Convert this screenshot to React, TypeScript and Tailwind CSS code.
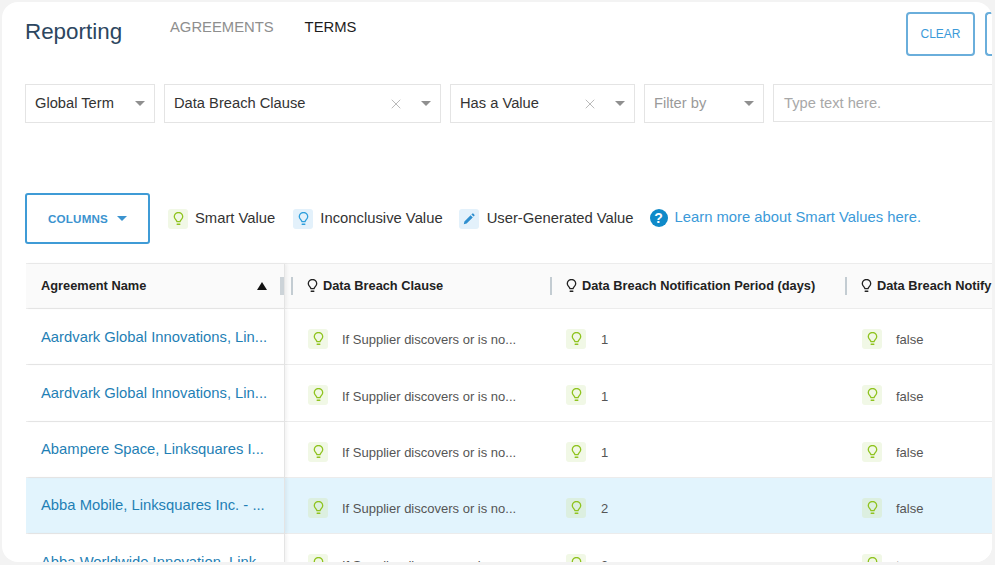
import { X } from "lucide-react";

const rows = [
  { name: "Aardvark Global Innovations, Lin...", period: "1", notify: "false" },
  { name: "Aardvark Global Innovations, Lin...", period: "1", notify: "false" },
  { name: "Abampere Space, Linksquares I...", period: "1", notify: "false" },
  { name: "Abba Mobile, Linksquares Inc. - ...", period: "2", notify: "false", active: true },
  { name: "Abba Worldwide Innovation, Link...", period: "3", notify: "true" },
];

function Bulb({ className }: { className?: string }) {
  return (
    <svg viewBox="0 0 14 18" fill="none" stroke="currentColor" strokeWidth="1.7" strokeLinecap="round" strokeLinejoin="round" className={className}>
      <path d="M5 12.4C4.6 10.2 1.6 8.9 1.6 6A5.4 5.4 0 0 1 12.4 6C12.4 8.9 9.4 10.2 9 12.4Z" />
      <path d="M5.4 15.8H8.6" strokeWidth="2" />
    </svg>
  );
}

function Caret({ className }: { className?: string }) {
  return <span className={`h-0 w-0 border-x-[5px] border-t-[5px] border-x-transparent ${className ?? "border-t-[#8f8f8f]"}`} />;
}

function Select({ label, width, clear, muted }: { label: string; width: string; clear?: boolean; muted?: boolean }) {
  return (
    <div className={`flex h-[39px] shrink-0 items-center border-[1.5px] border-[#e4e4e4] pl-[9px] pr-[9px] text-[14.7px] ${width} ${muted ? "text-[#9a9a9a]" : "text-[#333]"}`}>
      <span className="grow">{label}</span>
      {clear && <X size={16} strokeWidth={1.4} className="mr-[17px] text-[#b5b5b5]" />}
      <Caret />
    </div>
  );
}

function Tag({ tone, children }: { tone: string; children: React.ReactNode }) {
  return <span className={`grid size-5 shrink-0 place-items-center rounded-[3px] ${tone}`}>{children}</span>;
}

function HeadCell({ label, width }: { label: string; width: string }) {
  return (
    <div className={`flex shrink-0 items-center ${width}`}>
      <span className="h-[18px] w-0.5 shrink-0 bg-[#c3ccd2]" />
      <Bulb className="ml-3.5 mr-[5px] h-[14px] w-[11px] shrink-0 text-[#222]" />
      <span className="whitespace-nowrap text-[12.8px] font-bold text-[#222]">{label}</span>
    </div>
  );
}

function ValueCell({ text, width, gap, active }: { text: string; width: string; gap: string; active?: boolean }) {
  return (
    <div className={`flex shrink-0 items-center pt-[5px] ${width}`}>
      <Tag tone={active ? "bg-[#dcefe0]" : "bg-[#f1f8e6]"}>
        <Bulb className="h-[14px] w-[11px] text-[#8fc31f]" />
      </Tag>
      <span className={`whitespace-nowrap pt-0.5 text-[13px] text-[#555] ${gap}`}>{text}</span>
    </div>
  );
}

export default function App() {
  return (
    <div className="h-[565px] w-[995px] overflow-hidden bg-[#f3f3f3] p-0.5 font-['Liberation_Sans',Arial,sans-serif]">
      <div className="h-[560px] w-[990px] overflow-hidden rounded-2xl bg-white">
        <header className="flex h-[82px] pl-[23px]">
          <h1 className="w-[145px] pt-4 text-[22.4px] leading-7 text-[#2c4660]">Reporting</h1>
          <nav className="flex gap-[31px] pt-4 text-[14.8px] leading-[18px]">
            <span className="text-[#8e8e8e]">AGREEMENTS</span>
            <span className="text-[#1c1c1c]">TERMS</span>
          </nav>
          <div className="ml-auto flex gap-2.5 pt-2.5">
            <button type="button" className="h-11 w-[69px] rounded border-2 border-[#6aaedb] text-xs text-[#3b9ad9]">CLEAR</button>
            <span className="h-11 w-[7px] rounded-l border-y-2 border-l-2 border-[#6aaedb]" />
          </div>
        </header>

        <div className="flex gap-[9px] pl-[23px]">
          <Select label="Global Term" width="w-[130px]" />
          <Select label="Data Breach Clause" width="w-[277px]" clear />
          <Select label="Has a Value" width="w-[185px]" clear />
          <Select label="Filter by" width="w-[120px]" muted />
          <div className="flex h-[38px] grow items-center border-[1.5px] border-r-0 border-[#e4e4e4] pl-[10px] text-[14.7px] text-[#a8a8a8]">Type text here.</div>
        </div>

        <div className="mt-[70px] flex items-center pl-[23px]">
          <button type="button" className="flex h-[51px] w-[125px] items-center justify-center gap-[9px] rounded-[3px] border-2 border-[#3f9bd6] text-[11.6px] font-bold tracking-[0.2px] text-[#3b93cf]">
            COLUMNS
            <Caret className="border-t-[#3b93cf]" />
          </button>
          <div className="ml-[18px] flex items-center gap-[7px] text-[14.8px] text-[#333]">
            <Tag tone="bg-[#f1f8e6]"><Bulb className="h-[14px] w-[11px] text-[#8fc31f]" /></Tag>
            <span>Smart Value</span>
          </div>
          <div className="ml-[18px] flex items-center gap-[7px] text-[14.8px] text-[#333]">
            <Tag tone="bg-[#e3f1fb]"><Bulb className="h-[14px] w-[11px] text-[#2f9fdc]" /></Tag>
            <span>Inconclusive Value</span>
          </div>
          <div className="ml-4 flex items-center gap-2 text-[14.8px] text-[#333]">
            <Tag tone="bg-[#e3f1fb]">
              <svg viewBox="0 0 12 12" className="size-3 fill-[#2f8fcf]">
                <path d="M0.8 11.2 1.4 8.4 7.6 2.2 9.8 4.4 3.6 10.6ZM8.4 1.4 9.3 0.6C9.6 0.3 10 0.3 10.3 0.6L11.4 1.7C11.7 2 11.7 2.4 11.4 2.7L10.6 3.6Z" />
              </svg>
            </Tag>
            <span>User-Generated Value</span>
          </div>
          <div className="ml-[16px] flex items-center gap-[7px] pb-0.5 text-[14.8px] text-[#3b9ad9]">
            <span className="grid size-[18px] place-items-center rounded-full bg-[#0f8ac9] text-[14px] font-bold leading-none text-white">?</span>
            <span>Learn more about Smart Values here.</span>
          </div>
        </div>

        <div className="ml-6 mt-[19px]">
          <div className="flex h-[46px] border-y border-[#ececec] bg-[#fafafa]">
            <div className="flex w-[259px] shrink-0 items-center border-r border-[#e4e4e4] pl-[15px] shadow-[2px_0_3px_rgba(0,0,0,0.05)]">
              <span className="grow text-[12.8px] font-bold text-[#222]">Agreement Name</span>
              <span className="mr-[13px] h-0 w-0 border-x-[5px] border-b-[8px] border-x-transparent border-b-[#111]" />
              <span className="h-[18px] w-1 bg-[#ccd3d8]" />
            </div>
            <div className="flex items-center pl-1.5">
              <HeadCell label="Data Breach Clause" width="w-[259px]" />
              <HeadCell label="Data Breach Notification Period (days)" width="w-[295px]" />
              <HeadCell label="Data Breach Notify" width="w-[200px]" />
            </div>
          </div>

          {rows.map((row, index) => (
            <div key={index} className={`flex h-[56.3px] border-b border-[#ececec] ${row.active ? "bg-[#e2f4fd]" : "bg-white"}`}>
              <div className="flex w-[259px] shrink-0 items-center border-r border-[#e4e4e4] pl-[15px] text-[14.8px] text-[#1f7fb5] shadow-[2px_0_3px_rgba(0,0,0,0.05)]">
                <span className="whitespace-nowrap">{row.name}</span>
              </div>
              <div className="flex pl-[23px]">
                <ValueCell text="If Supplier discovers or is no..." width="w-[258px]" gap="ml-3.5" active={row.active} />
                <ValueCell text={row.period} width="w-[296px]" gap="ml-[15px]" active={row.active} />
                <ValueCell text={row.notify} width="w-[120px]" gap="ml-3.5" active={row.active} />
              </div>
            </div>
          ))}
        </div>
      </div>
    </div>
  );
}
